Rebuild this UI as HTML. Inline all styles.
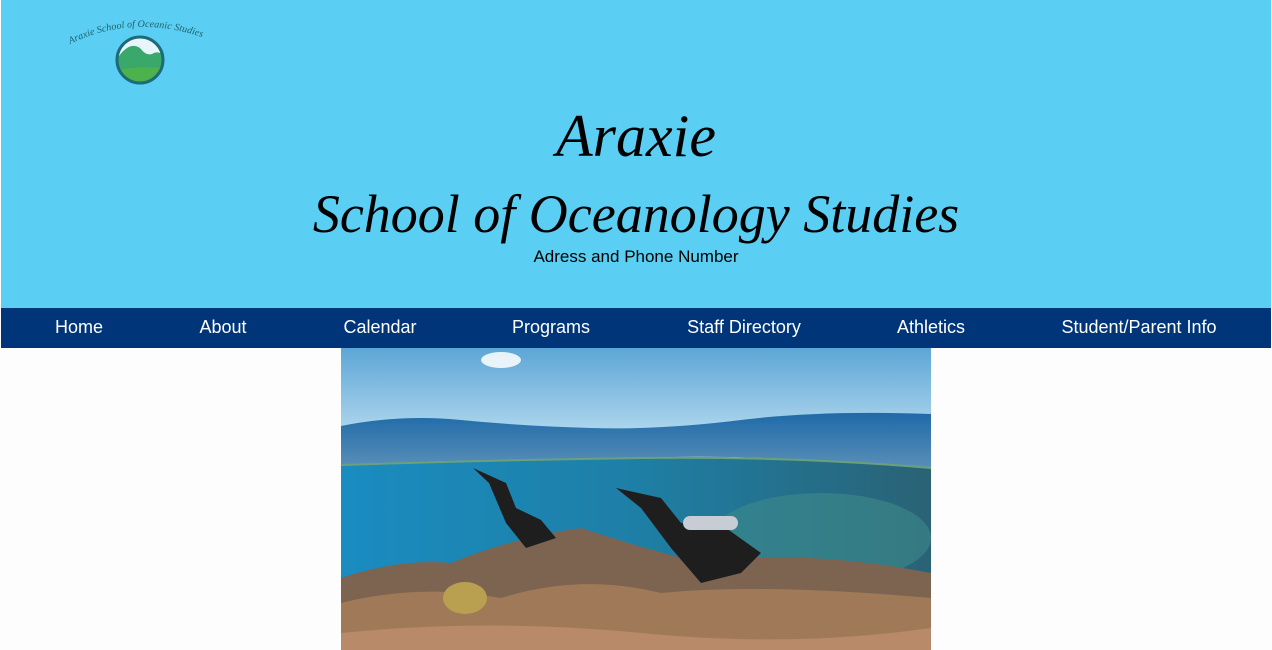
<!DOCTYPE html>
<html><head><meta charset="utf-8"><style>
html,body{margin:0;padding:0;width:1272px;height:650px;overflow:hidden;background:#fdfdfd;font-family:"Liberation Sans",sans-serif}
#hdr{position:absolute;left:1px;top:0;width:1270px;height:308px;background:#5bcff3}
.t{position:absolute;left:0;width:1272px;text-align:center;font-family:"Liberation Serif",serif;font-style:italic;color:#000}
#nav{position:absolute;left:1px;top:308px;width:1270px;height:40px;background:#003679}
.n{position:absolute;top:0;line-height:38px;color:#fff;font-size:18px;transform:translateX(-50%);white-space:nowrap}
</style></head><body>
<div id="hdr"></div>
<svg style="position:absolute;left:60px;top:10px" width="160" height="80" viewBox="0 0 160 80">
<defs><path id="arc" d="M10 34 Q76 2 150 30"/><clipPath id="c"><circle cx="80" cy="50" r="23"/></clipPath></defs>
<text font-family="Liberation Serif" font-style="italic" font-size="10" fill="#1d5f6c" textLength="136"><textPath href="#arc">Araxie School of Oceanic Studies</textPath></text>
<g clip-path="url(#c)"><rect x="55" y="25" width="50" height="50" fill="#e8f6fb"/><path d="M55 52 Q68 30 80 38 Q86 46 92 44 Q98 40 105 46 L105 80 L55 80Z" fill="#3aa86a"/><path d="M55 60 Q80 56 105 58 L105 80 L55 80Z" fill="#4cb24e"/></g>
<circle cx="80" cy="50" r="23" fill="none" stroke="#1d6a78" stroke-width="3"/>
</svg>
<div class="t" style="top:103px;font-size:60px;line-height:66px">Araxie</div>
<div class="t" style="top:181px;font-size:54px;line-height:66px">School of Oceanology Studies</div>
<div style="position:absolute;left:0;width:1272px;top:247px;text-align:center;font-size:17px">Adress and Phone Number</div>
<div id="nav">
<span class="n" style="left:78px">Home</span><span class="n" style="left:222px">About</span><span class="n" style="left:379px">Calendar</span><span class="n" style="left:550px">Programs</span><span class="n" style="left:743px">Staff Directory</span><span class="n" style="left:930px">Athletics</span><span class="n" style="left:1138px">Student/Parent Info</span>
</div>
<svg style="position:absolute;left:341px;top:348px" width="590" height="302" viewBox="0 0 590 302">
<defs>
<linearGradient id="sky" x1="0" y1="0" x2="0" y2="1"><stop offset="0" stop-color="#5da6d6"/><stop offset="1" stop-color="#b4daef"/></linearGradient>
<linearGradient id="wat" x1="0" y1="0" x2="0" y2="1"><stop offset="0" stop-color="#1f6aa8"/><stop offset="1" stop-color="#5a8fb8"/></linearGradient>
<linearGradient id="uw" x1="0" y1="0" x2="1" y2="0"><stop offset="0" stop-color="#1a8cc0"/><stop offset="0.5" stop-color="#1e7fa6"/><stop offset="1" stop-color="#2a6275"/></linearGradient>
</defs>
<rect width="590" height="90" fill="url(#sky)"/>
<ellipse cx="160" cy="12" rx="20" ry="8" fill="#fff" opacity=".85"/>
<path d="M0 78 Q60 66 120 72 T250 80 T400 72 T590 66 L590 120 Q400 105 300 110 T0 118Z" fill="url(#wat)"/>
<path d="M0 118 Q150 112 300 110 T590 120 L590 302 L0 302Z" fill="url(#uw)"/>
<path d="M0 117 Q150 112 300 110 T590 120" stroke="#6aa17a" stroke-width="2" fill="none"/>
<ellipse cx="480" cy="190" rx="110" ry="45" fill="#3e8a8a" opacity=".6"/>
<path d="M0 230 Q60 210 110 215 Q170 190 240 180 Q300 200 360 215 Q460 200 590 225 L590 302 L0 302Z" fill="#7d6450"/>
<path d="M0 255 Q80 235 160 250 Q240 225 320 245 Q420 235 590 250 L590 302 L0 302Z" fill="#a07a58"/>
<path d="M0 285 Q150 270 300 285 T590 280 L590 302 L0 302Z" fill="#b88a6a"/>
<ellipse cx="124" cy="250" rx="22" ry="16" fill="#b8a050"/>
<path d="M132 120 L165 135 L175 160 L200 172 L215 190 L185 200 L165 175 L148 135Z" fill="#1e1e1e"/>
<path d="M275 140 L320 150 L340 175 L385 180 L420 205 L400 225 L360 235 L330 200 L300 160Z" fill="#1e1e1e"/>
<rect x="342" y="168" width="55" height="14" rx="7" fill="#c8ccd4"/>
</svg>
</body></html>
